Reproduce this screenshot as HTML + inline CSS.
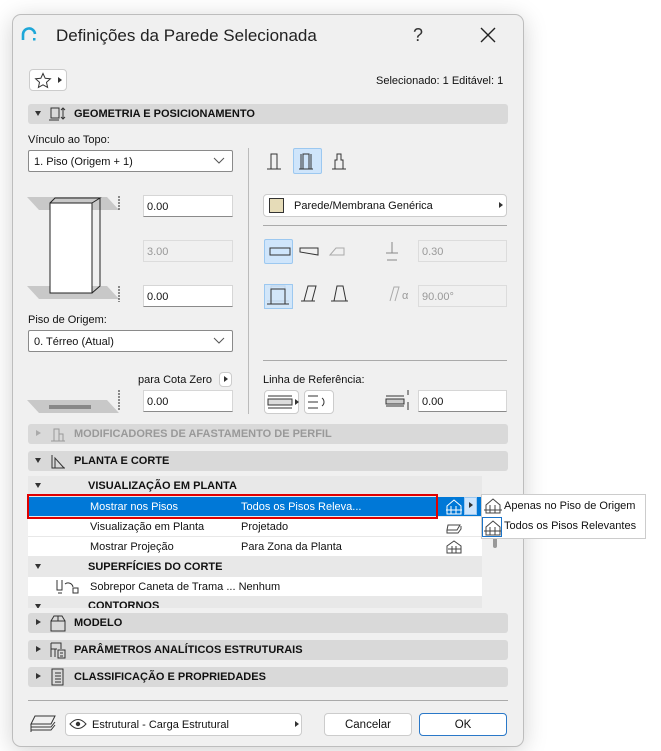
<!DOCTYPE html>
<html><head><meta charset="utf-8">
<style>
*{box-sizing:border-box;margin:0;padding:0}
body{width:661px;height:751px;background:#fff;font-family:"Liberation Sans",sans-serif;font-size:11px;color:#111;position:relative;overflow:hidden}
.a{position:absolute}
.dlg{left:12px;top:14px;width:512px;height:733px;background:#f0f0f0;border:1px solid #bdbdbd;border-radius:9px;box-shadow:0 4px 24px rgba(0,0,0,.18)}
.inp{position:absolute;background:#fff;border:1px solid #d6d6d6;border-bottom:1px solid #8a8a8a;height:22px;padding:5px 3px;font-size:11px}
.dis{background:#f0f0f0;border:1px solid #dcdcdc;color:#999}
.dd{position:absolute;background:#fff;border:1px solid #8a8a8a;border-radius:2px;height:22px;padding:5px 5px;font-size:11px}
.bar{position:absolute;left:28px;width:480px;height:20px;background:#d9d9d9;border-radius:3px;font-weight:bold;font-size:11px;padding:4px 0 0 46px}
.tri{position:absolute;left:7px;top:7px;width:0;height:0;border-left:3.5px solid transparent;border-right:3.5px solid transparent;border-top:5px solid #333}
.trr{position:absolute;left:8px;top:6px;width:0;height:0;border-top:3.5px solid transparent;border-bottom:3.5px solid transparent;border-left:5px solid #333}
.row{position:absolute;left:28px;width:454px;height:20px;background:#fff;padding-top:4px}
.row span{position:absolute}
.btn{position:absolute;background:#fff;border:1px solid #ccc;border-radius:4px;height:22px;text-align:center;padding-top:5px}
.hl{position:absolute;background:#cfe5fb;border:1px solid #9cc8f0;border-radius:2px}
</style></head><body>
<div class="a dlg"></div>
<!-- title -->
<svg class="a" style="left:21px;top:26px" width="16" height="16"><path d="M2 14 V9 A6 6 0 0 1 14 8" fill="none" stroke="#1ea7d8" stroke-width="2.6"/><rect x="12" y="12" width="2.5" height="2.5" fill="#1ea7d8"/></svg>
<div class="a" style="left:56px;top:26px;font-size:17px;color:#222">Definições da Parede Selecionada</div>
<div class="a" style="left:413px;top:25px;font-size:18px;color:#333">?</div>
<svg class="a" style="left:480px;top:27px" width="16" height="16"><path d="M1 1L15 15M15 1L1 15" stroke="#222" stroke-width="1.4"/></svg>
<!-- star -->
<div class="btn" style="left:29px;top:69px;width:38px;height:22px"></div>
<svg class="a" style="left:34px;top:72px" width="18" height="17"><path d="M9 1.5l2.2 4.8 5.2.5-3.9 3.5 1.1 5.1L9 12.8 4.4 15.4l1.1-5.1L1.6 6.8l5.2-.5z" fill="none" stroke="#333" stroke-width="1"/></svg>
<div class="a" style="left:58px;top:77px;border-top:3.5px solid transparent;border-bottom:3.5px solid transparent;border-left:4px solid #333"></div>
<div class="a" style="left:376px;top:75px;font-size:11px">Selecionado: 1 Editável: 1</div>
<!-- geometry -->
<div class="bar" style="top:104px"><div class="tri"></div>GEOMETRIA E POSICIONAMENTO</div>
<svg class="a" style="left:49px;top:106px" width="18" height="16"><rect x="2" y="2" width="8" height="10" fill="none" stroke="#333"/><path d="M0 14h10M14 2v11M12 4l2-2 2 2M12 11l2 2 2-2" stroke="#333" fill="none"/></svg>
<div class="a" style="left:28px;top:134px">Vínculo ao Topo:</div>
<div class="dd" style="left:28px;top:150px;width:205px">1. Piso (Origem + 1)</div>
<svg class="a" style="left:213px;top:157px" width="12" height="8"><path d="M1 1l5 5 5-5" fill="none" stroke="#555"/></svg>
<div class="a" style="left:248px;top:148px;width:1px;height:266px;background:#bbb"></div>
<div class="hl" style="left:293px;top:148px;width:29px;height:26px"></div>
<svg class="a" style="left:265px;top:150px" width="90" height="22"><g fill="none" stroke="#333"><rect x="6" y="4" width="6" height="15"/><path d="M2 19h14"/><rect x="38" y="4" width="6" height="15"/><path d="M34 19h14M36 4v15M46 4v15"/><path d="M70 19V10h2V4h4v6h2v9M67 19h14"/></g></svg>
<!-- wall illustration -->
<svg class="a" style="left:27px;top:194px" width="96" height="110"><polygon points="0,3 80,3 92,16 12,16" fill="#c8c8c8"/><polygon points="0,92 80,92 92,105 12,105" fill="#c8c8c8"/><rect x="23" y="9" width="42" height="90" fill="#fff" stroke="#222"/><path d="M23 9l5-5h45l-8 5M73 4v88l-8 7" fill="none" stroke="#222"/><path d="M92 2v14M92 92v16" stroke="#222" stroke-dasharray="2 1"/></svg>
<div class="inp" style="left:143px;top:195px;width:90px">0.00</div>
<div class="inp dis" style="left:143px;top:240px;width:90px">3.00</div>
<div class="inp" style="left:143px;top:285px;width:90px">0.00</div>
<div class="btn" style="left:263px;top:194px;width:244px;height:23px;text-align:left;padding-left:30px;border-color:#ccc">Parede/Membrana Genérica</div>
<div class="a" style="left:269px;top:198px;width:15px;height:15px;border:1px solid #333;background:#e6dcb8"></div>
<div class="a" style="left:499px;top:202px;border-top:3.5px solid transparent;border-bottom:3.5px solid transparent;border-left:4px solid #333"></div>
<div class="a" style="left:263px;top:225px;width:244px;height:1px;background:#aaa"></div>
<div class="hl" style="left:264px;top:239px;width:29px;height:25px"></div>
<svg class="a" style="left:266px;top:240px" width="150" height="70"><g fill="none" stroke="#333"><rect x="4" y="8" width="20" height="7"/><path d="M34 8h18v7l-18-3z"/><path d="M64 15l6-7h8v7z" stroke="#aaa"/><path d="M126 2v11M120 13h12M121 20h10" stroke="#888"/><rect x="5" y="46" width="14" height="15"/><path d="M1 61h22"/><path d="M38 61l4-15h8l-4 15M35 61h14"/><path d="M68 61l3-15h6l3 15M65 61h17"/><path d="M124 61l4-14h5l-4 14" stroke="#aaa"/></g></svg>
<div class="inp dis" style="left:418px;top:240px;width:89px">0.30</div>
<div class="hl" style="left:264px;top:284px;width:29px;height:25px;background:transparent"></div>
<div class="a" style="left:264px;top:284px;width:29px;height:25px;background:#cfe5fb;border:1px solid #9cc8f0;opacity:.9;z-index:-0"></div>
<svg class="a" style="left:266px;top:286px" width="80" height="22"><g fill="none" stroke="#333"><rect x="5" y="3" width="14" height="15"/><path d="M1 18h22"/></g></svg>
<div class="a" style="left:402px;top:290px;color:#999">α</div>
<div class="inp dis" style="left:418px;top:285px;width:89px">90.00°</div>
<div class="a" style="left:28px;top:314px">Piso de Origem:</div>
<div class="dd" style="left:28px;top:330px;width:205px">0. Térreo (Atual)</div>
<svg class="a" style="left:213px;top:337px" width="12" height="8"><path d="M1 1l5 5 5-5" fill="none" stroke="#555"/></svg>
<div class="a" style="left:263px;top:360px;width:244px;height:1px;background:#aaa"></div>
<div class="a" style="left:138px;top:374px">para Cota Zero</div>
<div class="btn" style="left:219px;top:372px;width:13px;height:15px;padding:0"></div>
<div class="a" style="left:224px;top:376px;border-top:3.5px solid transparent;border-bottom:3.5px solid transparent;border-left:4px solid #333"></div>
<svg class="a" style="left:27px;top:390px" width="96" height="24"><polygon points="0,10 80,10 92,23 12,23" fill="#c8c8c8"/><rect x="22" y="15" width="42" height="4" fill="#888"/><path d="M92 0v21" stroke="#222" stroke-dasharray="2 1"/></svg>
<div class="inp" style="left:143px;top:390px;width:90px">0.00</div>
<div class="a" style="left:263px;top:374px">Linha de Referência:</div>
<div class="btn" style="left:264px;top:390px;width:35px;height:24px"></div>
<div class="btn" style="left:304px;top:390px;width:30px;height:24px"></div>
<svg class="a" style="left:266px;top:393px" width="70" height="18"><g fill="none" stroke="#333"><path d="M2 3h24M2 15h24"/><rect x="2" y="6" width="24" height="6" fill="#ddd"/><path d="M42 3h10M42 9h10M42 15h10"/><path d="M56 5a5 5 0 0 1 0 8" /></g><path d="M29 6l4 3-4 3z" fill="#333"/></svg>
<svg class="a" style="left:384px;top:390px" width="30" height="22"><g fill="none" stroke="#333"><path d="M2 6h18M2 16h18"/><rect x="2" y="9" width="18" height="5" fill="#ccc"/><path d="M24 0v5M24 12v8"/></g></svg>
<div class="inp" style="left:418px;top:390px;width:89px">0.00</div>
<!-- sections -->
<div class="bar" style="top:424px;color:#999"><div class="trr" style="border-left-color:#aaa"></div>MODIFICADORES DE AFASTAMENTO DE PERFIL</div>
<svg class="a" style="left:50px;top:426px" width="16" height="16"><path d="M1 15h14M4 15V3h5v12M9 8h4v7" fill="none" stroke="#999"/></svg>
<div class="bar" style="top:451px"><div class="tri"></div>PLANTA E CORTE</div>
<svg class="a" style="left:50px;top:453px" width="16" height="16"><path d="M2 2v13h13M5 15V5l9 10" fill="none" stroke="#333"/></svg>
<!-- tree -->
<div class="a" style="left:28px;top:476px;width:454px;height:132px;background:#e8e8e8;overflow:hidden">
<div class="a" style="left:0;top:0;width:454px;height:20px;font-weight:bold;padding:4px 0 0 60px"><div class="tri"></div>VISUALIZAÇÃO EM PLANTA</div>
<div class="a" style="left:0;top:21px;width:454px;height:19px;background:#0078d7;color:#fff;padding-top:4px"><span class="a" style="left:62px">Mostrar nos Pisos</span><span class="a" style="left:213px">Todos os Pisos Releva...</span></div>
<div class="a" style="left:0;top:41px;width:454px;height:19px;background:#fff;padding-top:4px"><span class="a" style="left:62px">Visualização em Planta</span><span class="a" style="left:213px">Projetado</span></div>
<div class="a" style="left:0;top:61px;width:454px;height:19px;background:#fff;padding-top:4px"><span class="a" style="left:62px">Mostrar Projeção</span><span class="a" style="left:213px">Para Zona da Planta</span></div>
<div class="a" style="left:0;top:81px;width:454px;height:20px;font-weight:bold;padding:4px 0 0 60px"><div class="tri"></div>SUPERFÍCIES DO CORTE</div>
<div class="a" style="left:0;top:101px;width:454px;height:19px;background:#fff;padding-top:4px"><span class="a" style="left:62px">Sobrepor Caneta de Trama ... Nenhum</span></div>
<div class="a" style="left:0;top:121px;width:454px;height:20px;font-weight:bold;padding:3px 0 0 60px"><div class="tri"></div>CONTORNOS</div>
</div>
<svg class="a" style="left:55px;top:579px" width="26" height="16"><path d="M2 1v10h5V1M3 14h4M10 5a5 5 0 0 1 8 3" fill="none" stroke="#333"/><rect x="18" y="9" width="5" height="5" fill="none" stroke="#333"/></svg>
<div class="a" style="left:27px;top:494px;width:411px;height:25px;border:2px solid #e00000"></div>
<svg class="a" style="left:445px;top:498px" width="18" height="60"><g fill="none" stroke="#fff"><path d="M2 8l7-6 7 6v8H2zM1 12h16M6 8v8M11 8v8"/></g><g fill="none" stroke="#444"><path d="M3 27h12l-3 5H2zM2 32v3h11l3-4v-3"/><path d="M2 48l7-5 7 5v7H2zM3 51h13M7 48v7M11 48v7"/></g></svg>
<div class="a" style="left:464px;top:497px;width:13px;height:18px;background:#cfe5fb;border:1px solid #9cc8f0"></div>
<div class="a" style="left:469px;top:502px;border-top:3.5px solid transparent;border-bottom:3.5px solid transparent;border-left:4px solid #333"></div>
<div class="a" style="left:493px;top:530px;width:4px;height:18px;background:#999;border-radius:2px"></div>
<div class="a" style="left:481px;top:494px;width:165px;height:45px;background:#fff;border:1px solid #ccc"></div>
<svg class="a" style="left:484px;top:497px" width="18" height="40"><g fill="none" stroke="#444"><path d="M2 8l7-6 7 6v8H2zM0 13h18M6 8v8M11 8v8"/><path d="M2 30l7-6 7 6v8H2zM0 34h18M6 30v8M11 30v8"/></g></svg>
<div class="a" style="left:482px;top:517px;width:20px;height:20px;border:1px solid #1a73c8"></div>
<div class="a" style="left:504px;top:500px;font-size:11px">Apenas no Piso de Origem</div>
<div class="a" style="left:504px;top:520px;font-size:11px">Todos os Pisos Relevantes</div>
<div class="bar" style="top:613px"><div class="trr"></div>MODELO</div>
<svg class="a" style="left:49px;top:614px" width="18" height="18"><path d="M2 7h14v10H2zM2 7l3-5h8l3 5M9 2v5" fill="none" stroke="#333"/></svg>
<div class="bar" style="top:640px"><div class="trr"></div>PARÂMETROS ANALÍTICOS ESTRUTURAIS</div>
<svg class="a" style="left:49px;top:641px" width="18" height="18"><path d="M2 2h10v6M2 2v14M2 8h6M6 8v8M9 9h7v8H9zM11 12h3M11 15h3" fill="none" stroke="#333"/></svg>
<div class="bar" style="top:667px"><div class="trr"></div>CLASSIFICAÇÃO E PROPRIEDADES</div>
<svg class="a" style="left:51px;top:668px" width="14" height="18"><path d="M1 1h11v16H1zM4 5h6M4 8h6M4 11h6M4 14h6" fill="none" stroke="#333"/></svg>
<div class="a" style="left:28px;top:700px;width:480px;height:1px;background:#aaa"></div>
<svg class="a" style="left:29px;top:714px" width="28" height="20"><g fill="none" stroke="#333"><path d="M6 2h20l-4 8H2zM2 13h20l4-5M2 16h20l4-5M2 10v8"/></g></svg>
<div class="btn" style="left:65px;top:713px;width:237px;height:23px;text-align:left;padding-left:26px">Estrutural - Carga Estrutural</div>
<svg class="a" style="left:69px;top:718px" width="18" height="12"><path d="M1 6q8-9 16 0q-8 9-16 0z" fill="none" stroke="#333"/><circle cx="9" cy="6" r="2.2" fill="#333"/></svg>
<div class="a" style="left:295px;top:721px;border-top:3.5px solid transparent;border-bottom:3.5px solid transparent;border-left:4px solid #333"></div>
<div class="btn" style="left:324px;top:713px;width:88px;height:23px;font-size:11.5px">Cancelar</div>
<div class="btn" style="left:419px;top:713px;width:88px;height:23px;border:1px solid #2a78c8;font-size:11.5px">OK</div>
</body></html>
